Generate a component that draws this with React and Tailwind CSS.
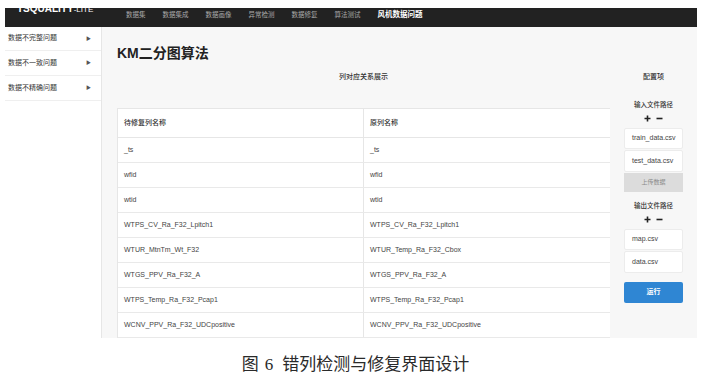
import React from 'react';

const navItems = ['数据集', '数据集成', '数据画像', '异常检测', '数据修复', '算法测试'];
const sideItems = ['数据不完整问题', '数据不一致问题', '数据不精确问题'];
const rows = [
  ['_ts', '_ts'],
  ['wfid', 'wfid'],
  ['wtid', 'wtid'],
  ['WTPS_CV_Ra_F32_Lpitch1', 'WTPS_CV_Ra_F32_Lpitch1'],
  ['WTUR_MtnTm_Wt_F32', 'WTUR_Temp_Ra_F32_Cbox'],
  ['WTGS_PPV_Ra_F32_A', 'WTGS_PPV_Ra_F32_A'],
  ['WTPS_Temp_Ra_F32_Pcap1', 'WTPS_Temp_Ra_F32_Pcap1'],
  ['WCNV_PPV_Ra_F32_UDCpositive', 'WCNV_PPV_Ra_F32_UDCpositive'],
];

const PlusMinus = () => (
  <div className="mt-[3px] flex h-[10px] items-center justify-center gap-[5px] text-[#222]">
    <svg width="7" height="7" viewBox="0 0 7 7">
      <path d="M3.5 0.5v6M0.5 3.5h6" stroke="currentColor" strokeWidth="1.6" />
    </svg>
    <svg width="7" height="7" viewBox="0 0 7 7">
      <path d="M0.5 3.5h6" stroke="currentColor" strokeWidth="1.6" />
    </svg>
  </div>
);

const FileBox = ({ name, className = '' }) => (
  <div className={`flex w-[59px] items-center rounded-[2px] border border-[#ececec] bg-white pl-[7px] text-[7px] text-[#444] ${className}`}>
    {name}
  </div>
);

const App = () => {
  return (
    <div className="h-[388px] w-[711px] overflow-hidden bg-white pt-[8px] font-['Liberation_Sans','Noto_Sans_CJK_SC',sans-serif]">
      <div className="mx-[5px] w-[692px]">
        {/* Top bar, logo is cropped at the top like the screenshot */}
        <div className="flex h-[19px] items-start overflow-hidden bg-[#222222]">
          <div className="-mt-[4px] ml-[12px] w-[109px] whitespace-nowrap text-[10px] font-bold leading-[10px] text-white">
            TSQUALITY<span className="text-[8px] font-normal">-LITE</span>
          </div>
          <div className="mt-[2px] flex items-center gap-[17px] leading-[10px]">
            {navItems.map((item) => (
              <span key={item} className="text-[6.5px] text-[#a9a9a9]">{item}</span>
            ))}
            <span className="text-[7.5px] font-bold text-white">风机数据问题</span>
          </div>
        </div>

        <div className="flex h-[311px] overflow-hidden">
          {/* Sidebar */}
          <div className="w-[97px] shrink-0 border-r border-[#e6e6e6] bg-white">
            {sideItems.map((item, i) => (
              <div
                key={item}
                className={`flex items-center justify-between border-b border-[#efefef] pl-[3px] pr-[10px] text-[7px] text-[#333] ${i === 0 ? 'h-[24px]' : 'h-[25px]'}`}
              >
                <span>{item}</span>
                <span className="text-[5px] text-[#555]">▶</span>
              </div>
            ))}
          </div>

          {/* Main */}
          <div className="flex-1 bg-[#f7f7f7] pl-[15px] pt-[16px]">
            <h1 className="h-[20px] text-[14px] font-bold leading-[20px] text-[#222]">KM二分图算法</h1>
            <div className="mt-[9px] flex">
              <div className="w-[493px]">
                <div className="h-[10px] text-center text-[7px] font-medium leading-[10px] text-[#333]">列对应关系展示</div>
                <div className="mt-[26px] border-l border-t border-[#e6e6e6] bg-white">
                  <div className="flex h-[29px] border-b border-[#e6e6e6] text-[7px] font-medium text-[#333]">
                    <div className="flex w-[246px] items-center border-r border-[#e6e6e6] pl-[6px]">待修复列名称</div>
                    <div className="flex flex-1 items-center pl-[6px]">原列名称</div>
                  </div>
                  {rows.map(([a, b], i) => (
                    <div key={i} className="flex h-[25px] border-b border-[#e9e9e9] text-[7px] text-[#444]">
                      <div className="flex w-[246px] items-center border-r border-[#e6e6e6] pl-[6px]">{a}</div>
                      <div className="flex flex-1 items-center pl-[6px]">{b}</div>
                    </div>
                  ))}
                </div>
              </div>

              {/* Config panel */}
              <div className="flex w-[87px] flex-col items-center">
                <div className="h-[10px] text-[7px] font-medium leading-[10px] text-[#333]">配置项</div>
                <div className="mt-[18px] h-[10px] text-[6.5px] font-medium leading-[10px] text-[#333]">输入文件路径</div>
                <PlusMinus />
                <FileBox name="train_data.csv" className="mt-[5px] h-[21px]" />
                <FileBox name="test_data.csv" className="mt-[1px] h-[22px]" />
                <div className="mt-[1px] flex h-[19px] w-[59px] items-center justify-center bg-[#dcdcdc] text-[6px] text-[#8a8a8a]">
                  上传数据
                </div>
                <div className="mt-[9px] h-[10px] text-[6.5px] font-medium leading-[10px] text-[#333]">输出文件路径</div>
                <PlusMinus />
                <FileBox name="map.csv" className="mt-[5px] h-[21px]" />
                <FileBox name="data.csv" className="mt-[1px] h-[22px]" />
                <div className="mt-[9px] flex h-[21px] w-[59px] items-center justify-center rounded-[2px] bg-[#2f86d3] text-[7px] font-bold text-white">
                  运行
                </div>
              </div>
            </div>
          </div>
        </div>
      </div>

      {/* Figure caption */}
      <div className="mt-[16px] flex justify-center gap-[6px] font-['Liberation_Serif','Noto_Sans_CJK_SC',serif] text-[17px] leading-[22px] text-[#2a2a2a]">
        <span>图</span>
        <span>6</span>
        <span className="ml-[3px]">错列检测与修复界面设计</span>
      </div>
    </div>
  );
};

export default App;
